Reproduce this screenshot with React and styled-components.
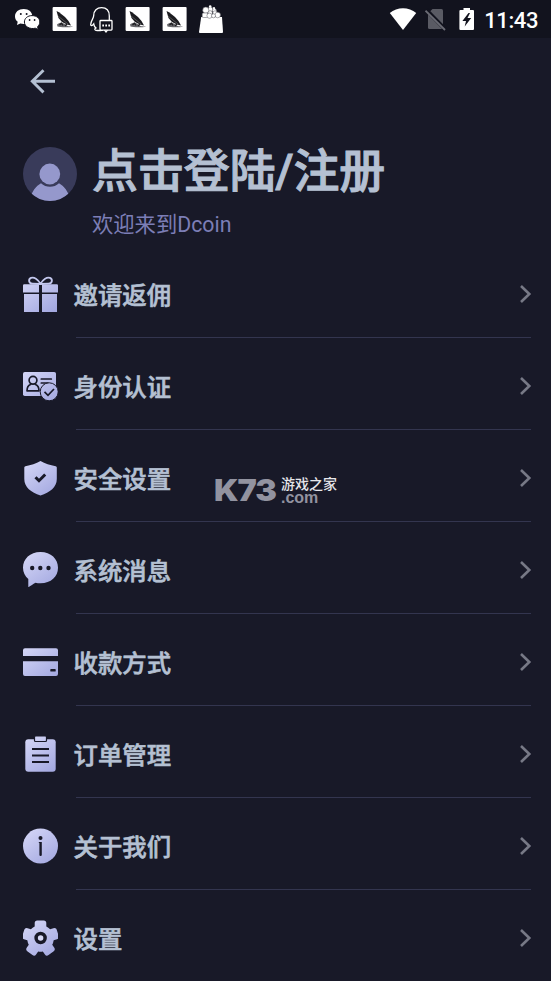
import React from 'react';
import styled, { createGlobalStyle } from 'styled-components';

const GlobalStyle = createGlobalStyle`
  * {
    box-sizing: border-box;
  }

  body {
    margin: 0;
    background-color: #181928;
    font-family: Roboto, 'Noto Sans CJK SC', sans-serif;
  }
`;

const Screen = styled.div`
  position: relative;
  width: 551px;
  height: 981px;
  overflow: hidden;
  background-color: #181928;
`;

const StatusBar = styled.div`
  height: 38px;
  display: flex;
  justify-content: space-between;
  background-color: #12131e;
  color: #fff;

  svg {
    display: block;
  }
`;

const Notifications = styled.div`
  display: flex;
  padding: 5px 0 0 14px;
  gap: 8.8px;
`;

const SystemIcons = styled.div`
  display: flex;
  padding: 6px 13px 0 0;
`;

const Gap = styled.span`
  width: ${({ size }) => size}px;
`;

const Clock = styled.span`
  margin-left: 9px;
  font-size: 22px;
  font-weight: 500;
  line-height: 29px;
  letter-spacing: -0.4px;
`;

const BackButton = styled.button`
  display: block;
  margin: 30px 0 0 29px;
  padding: 0;
  border: 0;
  background: none;

  svg {
    display: block;
  }
`;

const Profile = styled.div`
  display: flex;
  height: 151px;
  padding: 52px 0 0 23px;
  gap: 15px;
`;

const Names = styled.div`
  margin-top: -6px;
`;

const Title = styled.h1`
  margin: 0;
  color: #b4c0d2;
  font-size: 45.9px;
  font-weight: 500;
  line-height: 60px;
  white-space: nowrap;
  -webkit-text-stroke: 1px #b4c0d2;
`;

const Welcome = styled.p`
  margin: 9px 0 0;
  color: #7c7eb6;
  font-size: 21.3px;
  line-height: 30px;
`;

const Menu = styled.div`
  display: flex;
  flex-direction: column;
`;

const Row = styled.div`
  display: flex;
  height: 92px;
  padding-left: 23px;

  > svg {
    flex: none;
    margin-top: 30px;
  }
`;

const RowBody = styled.div`
  flex: 1;
  display: flex;
  align-items: flex-start;
  justify-content: space-between;
  margin: 0 20px 0 18px;
  padding-top: 32px;
  border-bottom: 1px solid ${({ $last }) => $last ? 'transparent' : '#33354f'};

  svg {
    margin-top: 6px;
    margin-right: -1px;
  }
`;

const Label = styled.span`
  margin-left: -2.5px;
  color: #b4c0d2;
  font-size: 24.4px;
  font-weight: 500;
  line-height: 36px;
  -webkit-text-stroke: 0.6px #b4c0d2;
`;

const Watermark = styled.div`
  position: absolute;
  left: 214px;
  top: 474px;
  display: flex;
  gap: 4px;
`;

const WatermarkLogo = styled.div`
  width: 62px;
  color: #9293a0;
  font-family: Inter, sans-serif;
  font-size: 30px;
  font-weight: 900;
  line-height: 33px;
  letter-spacing: -1px;

  span {
    display: inline-block;
    transform: scaleX(1.08);
    transform-origin: left;
  }
`;

const WatermarkText = styled.div`
  display: flex;
  flex-direction: column;
  padding: 4px 0 0 1px;
`;

const SiteName = styled.span`
  color: #e6e6ea;
  font-size: 14px;
  font-weight: 500;
  line-height: 13px;
`;

const Domain = styled.span`
  color: #9293a0;
  font-family: 'Liberation Sans', sans-serif;
  font-size: 16px;
  font-weight: 700;
  line-height: 13px;
`;

const INK = '#181928';

const Icon = ({ children }) => (
  <svg width="35" height="36" viewBox="0 0 35 36" fill="url(#lilac)" stroke="none">
    {children}
  </svg>
);

const Defs = styled.svg`
  position: absolute;
`;

const GradientDefs = () => (
  <Defs width="0" height="0">
    <defs>
      <linearGradient id="lilac" gradientUnits="userSpaceOnUse" x1="4" y1="2" x2="30" y2="36">
        <stop offset="0" stopColor="#d3d5f6" />
        <stop offset="1" stopColor="#a3a8e0" />
      </linearGradient>
    </defs>
  </Defs>
);

const GiftIcon = () => (
  <Icon>
    <path d="M17.5 8C15 3 11 0.8 8 1.9C5 3.2 5.6 7.5 9.5 7.7L17.5 8C20 3 24 0.8 27 1.9C30 3.2 29.4 7.5 25.5 7.7Z" fill="none" stroke="#c4c8ee" strokeWidth="1.8" />
    <path d="M1.2 8.2H16V16.4H0V9.4Q0 8.2 1.2 8.2ZM19 8.2H33.8Q35 8.2 35 9.4V16.4H19ZM1 18H16V36H1ZM19 18H34V36H19Z" />
  </Icon>
);

const IdentityIcon = () => (
  <Icon>
    <rect y="4" width="33" height="24" rx="1.8" />
    <g fill="none" stroke={INK} strokeWidth="1.7" strokeLinecap="round" strokeLinejoin="round">
      <circle cx="10" cy="12.3" r="3.9" />
      <path d="M7.5 16.5C5 17.5 4 19.5 4 22.8H16C16 19.5 15 17.5 12.5 16.5M18.3 11H28.3M18.3 15H25" />
    </g>
    <circle cx="26.2" cy="23.8" r="9" stroke={INK} strokeWidth="1" />
    <path d="M21.5 23.8L25 27.3L31 21" fill="none" stroke={INK} strokeWidth="1.7" />
  </Icon>
);

const ShieldIcon = () => (
  <Icon>
    <path d="M17.5 1C22 3.6 27 5.2 32.7 6.2Q33.8 6.5 33.8 7.6V19C33.8 27 27 32.5 17.5 35.5C8 32.5 1.3 27 1.3 19V7.6Q1.3 6.5 2.4 6.2C8 5.2 13 3.6 17.5 1Z" />
    <path d="M12.5 17.2L16 20.7L22.2 14.5" fill="none" stroke={INK} strokeWidth="3" />
  </Icon>
);

const MessageIcon = () => (
  <Icon>
    <path d="M17.5 0C28 0 35 7 35 15.7C35 24.5 28 31.2 17.5 31.2C15.7 31.2 14 31.1 12.5 30.7C10 32 7.8 33.8 5.7 35Q5.3 35.2 5.3 34.5V27C2 24.3 0 20.3 0 15.7C0 7 7 0 17.5 0Z" />
    <g fill={INK}>
      <circle cx="9.2" cy="16" r="2.2" />
      <circle cx="17.3" cy="16" r="2.2" />
      <circle cx="25.5" cy="16" r="2.2" />
    </g>
  </Icon>
);

const CardIcon = () => (
  <Icon>
    <path d="M2 4.2H33Q35 4.2 35 6.2V12H0V6.2Q0 4.2 2 4.2ZM0 17.2H35V30Q35 32 33 32H2Q0 32 0 30Z" />
    <rect x="27.3" y="25" width="5.4" height="2.6" rx="0.7" fill={INK} />
  </Icon>
);

const OrderIcon = () => (
  <Icon>
    <rect x="2.3" y="3.2" width="30.4" height="32.5" rx="3" />
    <rect x="11.5" y="0" width="12" height="5.5" rx="1" stroke={INK} strokeWidth="1.2" />
    <path d="M9 13H26M9 19.5H26M9 26H26" stroke={INK} strokeWidth="2.1" />
  </Icon>
);

const InfoIcon = () => (
  <Icon>
    <circle cx="17.5" cy="18" r="17.5" />
    <circle cx="17.5" cy="10" r="2" fill={INK} />
    <path d="M15.8 14H18.8V27Q18.8 28 17.6 28Q16.4 28 16.4 27V15L15.8 14.8Z" fill={INK} />
  </Icon>
);

// five lobes around a round body
const GearIcon = () => (
  <Icon>
    <clipPath id="cog">
      <circle cx="17.5" cy="18.5" r="13.3" />
      {[0, 72, 144, 216, 288].map((angle) => (
        <rect
          key={angle}
          x="11.7"
          y="0.4"
          width="11.6"
          height="14"
          rx="2.6"
          transform={`rotate(${angle} 17.5 18.5)`}
        />
      ))}
    </clipPath>
    <rect width="35" height="36" clipPath="url(#cog)" />
    <circle cx="17.6" cy="18" r="4.5" fill="#d8daf6" stroke={INK} strokeWidth="3.5" />
  </Icon>
);

const Chevron = () => (
  <svg width="13" height="20" viewBox="0 0 13 20">
    <path d="M2 2L10.3 10L2 18" fill="none" stroke="#777986" strokeWidth="2.6" />
  </svg>
);

const WechatIcon = () => (
  <svg width="28" height="28" viewBox="0 0 28 28">
    <path d="M9.7 4C15 4 18.3 7.2 18.3 11.4C18.3 16 15 19 9.7 19L6.3 18.4L3 20L3.7 16.7C2 15.4 1 13.5 1 11.4C1 7.2 4.5 4 9.7 4Z" fill="#fff" />
    <path d="M18 10.6C22.8 10.6 25.8 13.5 25.8 17C25.8 19 24.8 20.7 23.6 21.8L24.2 24.5L21.3 23.2C16 24.5 10.4 21.7 10.4 17C10.4 13.5 13.5 10.6 18 10.6Z" fill="#fff" stroke="#12131e" strokeWidth="1" />
    <g fill="#12131e">
      <circle cx="6.8" cy="9" r="1" />
      <circle cx="12.6" cy="9" r="1" />
      <circle cx="15.6" cy="15" r="0.9" />
      <circle cx="20.6" cy="15" r="0.9" />
    </g>
  </svg>
);

const FeatherIcon = () => (
  <svg width="28" height="28" viewBox="0 0 28 28">
    <rect x="1.6" y="2" width="24" height="24" rx="1" fill="#fff" />
    <path d="M5.5 6L8 7.2L14 12L17.5 16L20 20.5L16 19.5L11 17L7.5 13Z" fill="#1c1c20" />
    <path d="M7 11L17 19" stroke="#888" strokeWidth="0.5" />
    <path d="M6 19.5C9 16.5 13 17.5 15 20C17 22 20 21 22 21.7C18 22.5 9 22.5 6.5 21.5Z" fill="#66666a" />
    <path d="M8.5 20L10.5 18.2L12 20.5M14 21L16 19" stroke="#1c1c20" strokeWidth="1.3" fill="none" />
  </svg>
);

const QqIcon = () => (
  <svg width="28" height="28" viewBox="0 0 28 28" fill="none" stroke="#fff" strokeWidth="1.3">
    <path d="M21.3 15V11C21.3 5.5 18 2.7 13.5 2.7C9 2.7 5.7 5.5 5.7 10.5C5.7 13.5 3 15.3 2.7 19.5C2.7 21.3 4 21 5.7 18.8C6 21 6.7 22 8 23C6 24 6.5 25.5 9 25.5H12.5L15 25" />
    <rect x="12" y="15.5" width="12" height="9.6" rx="0.8" fill="#12131e" />
    <path d="M16.5 25.2L18 27L19.5 25.2" />
    <path d="M14.3 20.5H16M17.3 20.5H19M20.3 20.5H22" strokeWidth="1.8" />
  </svg>
);

const BagIcon = () => (
  <svg width="28" height="28" viewBox="0 0 28 28">
    <path d="M3.2 12H24L25 27Q25 28 24 28H2Q0.9 28 1 27Z" fill="#fff" />
    <g fill="#fff" stroke="#55555c" strokeWidth="0.5">
      <circle cx="12.5" cy="4.4" r="2.4" />
      <circle cx="16.4" cy="5.5" r="2" />
      <circle cx="7.8" cy="5.2" r="3.1" />
      <circle cx="12.2" cy="8" r="2.3" />
      <circle cx="17" cy="8" r="2.2" />
      <rect x="4.2" y="8" width="5.5" height="4.5" rx="1" />
      <circle cx="11.5" cy="10.7" r="2.6" />
      <circle cx="19.7" cy="10" r="2.8" />
      <circle cx="15.5" cy="10.8" r="2" />
    </g>
    <g fill="#fff">
      <circle cx="12.2" cy="1.5" r="1.3" />
      <circle cx="16" cy="3.2" r="1.1" />
    </g>
  </svg>
);

const WifiIcon = () => (
  <svg width="28" height="28" viewBox="0 0 28 28">
    <path d="M0.8 7.1C8 0.7 20 0.7 27.2 7.1L14 23.9Z" fill="#fff" />
  </svg>
);

const NoSimIcon = () => (
  <svg width="22" height="28" viewBox="0 0 22 28">
    <path d="M7.5 3H16.5Q18 3 18 4.5V23H4.5Q3 23 3 21.5V7.5Z" fill="#5a5b64" />
    <path d="M1.5 4.2L20.5 23.7" stroke="#12131e" strokeWidth="4" />
    <path d="M0.5 4.7L20 24" stroke="#6b6c75" strokeWidth="1.8" />
  </svg>
);

const BatteryIcon = () => (
  <svg width="16" height="28" viewBox="0 0 16 28">
    <path d="M4.5 2H11V4H14Q15 4 15 5V22.9Q15 24 13.9 24H1.5Q0.4 24 0.4 22.9V5Q0.4 4 1.4 4H4.5Z" fill="#fff" />
    <path d="M9.5 7L3.4 15H7L5.7 20.5L12.2 12H8.5L11 7Z" fill="#12131e" />
  </svg>
);

const BackArrow = () => (
  <svg width="28" height="27" viewBox="0 0 28 27">
    <path d="M26 13.3H3.5M14.5 2.2L3.3 13.3L14.5 24.4" fill="none" stroke="#b4c0d2" strokeWidth="2.9" />
  </svg>
);

const Avatar = () => (
  <svg width="54" height="54" viewBox="0 0 54 54">
    <clipPath id="face">
      <circle cx="27" cy="27" r="27" />
    </clipPath>
    <g clipPath="url(#face)">
      <rect width="54" height="54" fill="#393b5a" />
      <path d="M6 54C9 44 13 39 18 36.3C23 41 31 41 36 36.3C41 39 45 44 48 54Z" fill="#9598cc" />
      <circle cx="26.8" cy="27" r="10.4" fill="#9598cc" />
    </g>
  </svg>
);

const items = [
  { label: '邀请返佣', icon: <GiftIcon /> },
  { label: '身份认证', icon: <IdentityIcon /> },
  { label: '安全设置', icon: <ShieldIcon /> },
  { label: '系统消息', icon: <MessageIcon /> },
  { label: '收款方式', icon: <CardIcon /> },
  { label: '订单管理', icon: <OrderIcon /> },
  { label: '关于我们', icon: <InfoIcon /> },
  { label: '设置', icon: <GearIcon /> },
];

const App = () => {
  return (
    <Screen>
      <GlobalStyle />
      <GradientDefs />
      <StatusBar>
        <Notifications>
          <WechatIcon />
          <FeatherIcon />
          <QqIcon />
          <FeatherIcon />
          <FeatherIcon />
          <BagIcon />
        </Notifications>
        <SystemIcons>
          <WifiIcon />
          <Gap size={8} />
          <NoSimIcon />
          <Gap size={12} />
          <BatteryIcon />
          <Clock>11:43</Clock>
        </SystemIcons>
      </StatusBar>
      <BackButton aria-label="返回">
        <BackArrow />
      </BackButton>
      <Profile>
        <Avatar />
        <Names>
          <Title>点击登陆/注册</Title>
          <Welcome>欢迎来到Dcoin</Welcome>
        </Names>
      </Profile>
      <Menu>
        {items.map(({ label, icon }, i) => (
          <Row key={label}>
            {icon}
            <RowBody $last={i === items.length - 1}>
              <Label>{label}</Label>
              <Chevron />
            </RowBody>
          </Row>
        ))}
      </Menu>
      <Watermark>
        <WatermarkLogo>
          <span>K73</span>
        </WatermarkLogo>
        <WatermarkText>
          <SiteName>游戏之家</SiteName>
          <Domain>.com</Domain>
        </WatermarkText>
      </Watermark>
    </Screen>
  )
}

export default App
